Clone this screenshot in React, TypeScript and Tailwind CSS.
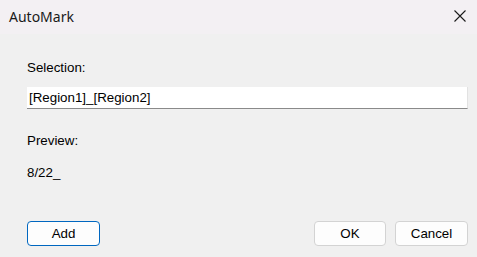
import React from 'react';

const sans = { fontFamily: '"Liberation Sans", Arial, sans-serif' };

const Button: React.FC<{ label: string; primary?: boolean; className?: string }> = ({ label, primary, className }) => (
  <button
    className={
      'h-[25px] rounded-[4px] bg-[#fdfdfd] text-[13.33px] leading-none text-black ' +
      (primary ? 'border border-[#0067c0] ' : 'border border-[#d3d3d3] ') +
      (className ?? '')
    }
  >
    {label}
  </button>
);

export default function App() {
  return (
    <div className="w-[477px] h-[257px] bg-[#f0f0f0] flex flex-col overflow-hidden" style={sans}>
      {/* title bar */}
      <div className="h-[34px] bg-[#f3f0f3] flex items-center justify-between pl-[9px] pr-[11px] shrink-0">
        <span className="text-[14px] text-[#1a1a1a] pb-[1px]" style={{ fontFamily: '"Noto Sans", "Open Sans", sans-serif' }}>
          AutoMark
        </span>
        <svg width="12" height="12" viewBox="0 0 12 12" className="mb-[2px]">
          <path d="M0.5 0.5L11.5 11.5M11.5 0.5L0.5 11.5" stroke="#1a1a1a" strokeWidth="1.1" />
        </svg>
      </div>

      <div className="flex flex-col pl-[27px] pr-[9px] text-[13.33px] leading-[15px] text-black">
        <div className="mt-[26px]">Selection:</div>
        <div className="mt-[12px] h-[22px] bg-white border-b border-[#8a8a8a] border-r border-r-[#e2e2e2] flex items-center pl-[2px]">
          [Region1]_[Region2]
        </div>
        <div className="mt-[24px]">Preview:</div>
        <div className="mt-[17px]">8/22_</div>
        <div className="mt-[41px] flex items-center">
          <Button label="Add" primary className="w-[73px]" />
          <div className="flex-1" />
          <Button label="OK" className="w-[72px]" />
          <Button label="Cancel" className="w-[73px] ml-[9px]" />
        </div>
      </div>
    </div>
  );
}
